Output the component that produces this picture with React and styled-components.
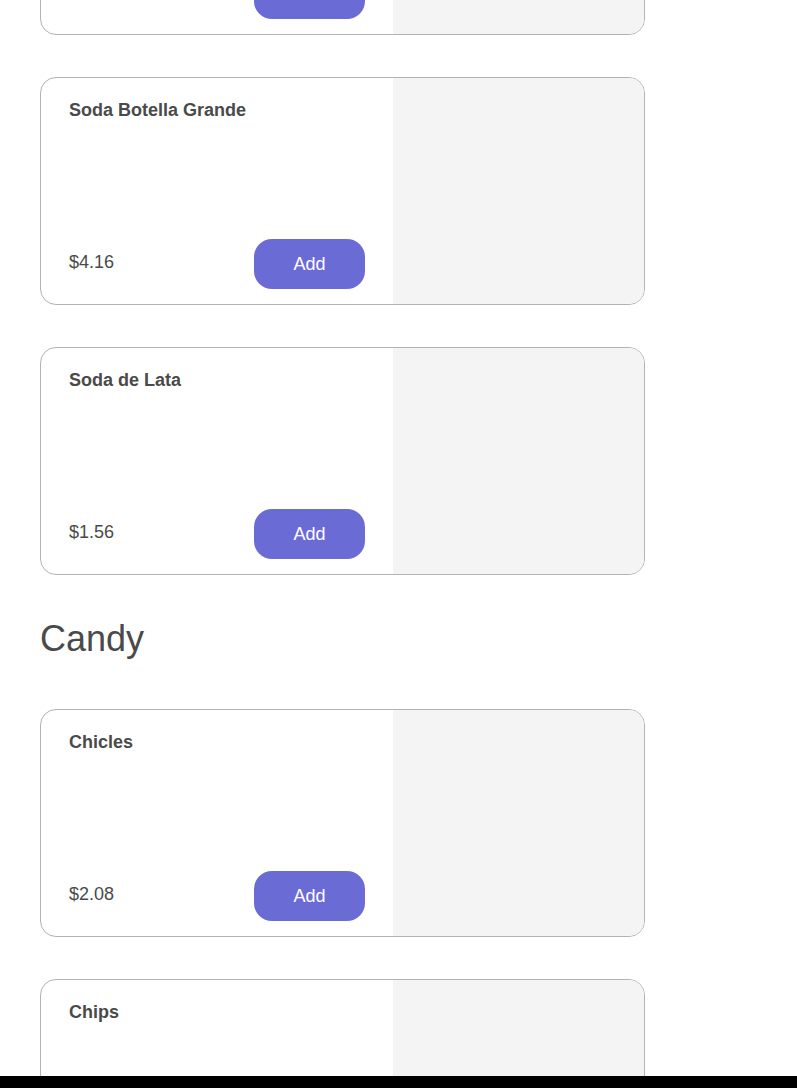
import React from "react";
import styled, { createGlobalStyle } from "styled-components";

const GlobalStyle = createGlobalStyle`
  html, body { margin: 0; padding: 0; background: #ffffff; }
  body { font-family: "Liberation Sans", Arial, Helvetica, sans-serif; color: #4a4a4a; overflow: hidden; }
`;

const Page = styled.main`
  padding: 0 0 0 40px;
  margin-top: -193px;
  display: flex;
  flex-direction: column;
  gap: 42px;
`;

const SectionTitle = styled.h2`
  margin: 1px 0 8px;
  font-size: 36px;
  line-height: 1.15;
  font-weight: 400;
  color: #4a4a4a;
`;

const Card = styled.article`
  box-sizing: border-box;
  width: 605px;
  height: 228px;
  border: 1px solid #b3b3b3;
  border-radius: 16px;
  overflow: hidden;
  display: flex;
  background: #fff;
  flex-shrink: 0;
`;

const Body = styled.div`
  box-sizing: border-box;
  width: 352px;
  padding: 22px 28px 15px 28px;
  display: flex;
  flex-direction: column;
  justify-content: space-between;
`;

const Name = styled.h3`
  margin: 0;
  font-size: 18px;
  line-height: 1.15;
  font-weight: 700;
  color: #4a4a4a;
`;

const Footer = styled.div`
  display: flex;
  align-items: center;
  justify-content: space-between;
`;

const Price = styled.span`
  font-size: 18px;
  line-height: 1.15;
  color: #4a4a4a;
  margin-bottom: 4px;
`;

const AddButton = styled.button`
  width: 111px;
  height: 50px;
  border: none;
  border-radius: 18px;
  background: #6b6bd6;
  color: #ffffff;
  font-family: "Liberation Sans", Arial, sans-serif;
  font-size: 18px;
  font-weight: 400;
  padding: 0;
  cursor: pointer;
`;

const Picture = styled.div`
  flex: 1;
  background: #f4f4f4;
`;

const BottomBar = styled.div`
  position: fixed;
  left: 0;
  right: 0;
  bottom: 0;
  height: 12px;
  background: #000;
`;

const ItemCard = ({ name, price }) => (
  <Card>
    <Body>
      <Name>{name}</Name>
      <Footer>
        <Price>{price}</Price>
        <AddButton>Add</AddButton>
      </Footer>
    </Body>
    <Picture />
  </Card>
);

export default function App() {
  return (
    <>
      <GlobalStyle />
      <Page>
        <ItemCard name="Soda Botella Mediana" price="$3.12" />
        <ItemCard name="Soda Botella Grande" price="$4.16" />
        <ItemCard name="Soda de Lata" price="$1.56" />
        <SectionTitle>Candy</SectionTitle>
        <ItemCard name="Chicles" price="$2.08" />
        <ItemCard name="Chips" price="$1.04" />
      </Page>
      <BottomBar />
    </>
  );
}
